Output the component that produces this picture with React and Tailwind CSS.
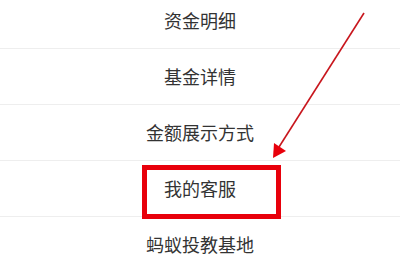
import React from "react";

const items = ["资金明细", "基金详情", "金额展示方式", "我的客服", "蚂蚁投教基地"];

export default function App() {
  return (
    <div
      className="relative w-[400px] h-[257px] overflow-hidden bg-white"
      style={{ fontFamily: '"Noto Sans CJK SC", "Noto Sans", sans-serif' }}
    >
      {/* menu list */}
      <div className="-mt-[7px] flex flex-col">
        {items.map((label) => (
          <div
            key={label}
            className="h-[56px] flex items-center justify-center border-b border-[#eeeeee] text-[18px] text-[#333333]"
          >
            {label}
          </div>
        ))}
      </div>

      {/* highlight box */}
      <div className="absolute left-[142px] top-[165px] w-[139px] h-[54px] border-[5px] border-[#e8000b]" />

      {/* arrow */}
      <svg className="absolute left-0 top-0" width="400" height="257" viewBox="0 0 400 257">
        <line x1="364" y1="13" x2="279" y2="147" stroke="#c8161d" strokeWidth="1.6" />
        <polygon points="273,158 274,143 286,151" fill="#e8000b" />
      </svg>
    </div>
  );
}
